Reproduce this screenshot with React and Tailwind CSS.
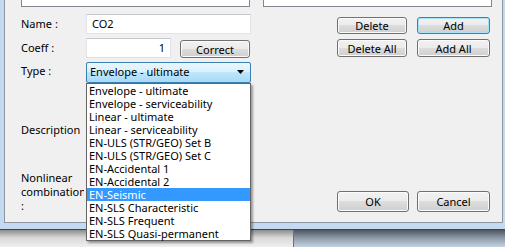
import React from "react";
import clsx from "clsx";

const items = [
    "Envelope - ultimate",
    "Envelope - serviceability",
    "Linear - ultimate",
    "Linear - serviceability",
    "EN-ULS (STR/GEO) Set B",
    "EN-ULS (STR/GEO) Set C",
    "EN-Accidental 1",
    "EN-Accidental 2",
    "EN-Seismic",
    "EN-SLS Characteristic",
    "EN-SLS Frequent",
    "EN-SLS Quasi-permanent",
];

const Btn = ({ children, className, isDefault }) => (
    <div
        className={clsx(
            "flex items-center justify-center rounded-[3px] border text-[11px] leading-none text-black",
            "bg-[linear-gradient(#f2f2f2_0%,#ebebeb_50%,#dddddd_50%,#cfcfcf_100%)]",
            isDefault
                ? "border-[#3c7fb1] shadow-[inset_0_0_0_1px_#a8e3fb]"
                : "border-[#707070] shadow-[inset_0_0_0_1px_#fbfbfb]",
            className
        )}
    >
        {children}
    </div>
);

const Label = ({ children, className }) => (
    <div className={clsx("w-[65px] shrink-0 text-[11px] text-black", className)}>{children}</div>
);

const TextBox = ({ children, className }) => (
    <div
        className={clsx(
            "h-[20px] shrink-0 border border-[#dfe3ea] border-t-[#c3c6cc] bg-white px-[5px] text-[11px] leading-[18px] text-black",
            className
        )}
    >
        {children}
    </div>
);

const App = () => {
    return (
        <div className="relative flex h-[247px] w-[505px] flex-col overflow-hidden bg-white font-['Noto_Sans',sans-serif]">
            {/* window frame */}
            <div className="h-[230px] shrink-0 border-b border-[#3d4651] bg-[#c4daf0] pb-[6px] pl-[4px] pr-[2px]">
                <div className="flex h-full flex-col border-x border-b border-[#8e969f] bg-[#f0f0f0] pl-[16px]">
                    {/* list boxes cut off at the top */}
                    <div className="flex h-[7px] shrink-0">
                        <div className="w-[229px] border-x border-b border-[#828790] bg-white" />
                        <div className="ml-[13px] w-[229px] border-x border-b border-[#828790] bg-white" />
                    </div>

                    {/* name */}
                    <div className="mt-[7px] flex h-[20px] items-start">
                        <Label className="leading-[20px]">Name :</Label>
                        <TextBox className="w-[165px]">CO2</TextBox>
                        <Btn className="ml-[86px] mt-[3px] h-[17px] w-[70px]">Delete</Btn>
                        <Btn isDefault className="ml-[10px] mt-[3px] h-[17px] w-[73px]">Add</Btn>
                    </div>

                    {/* coeff */}
                    <div className="mt-[4px] flex h-[20px] items-start">
                        <Label className="leading-[20px]">Coeff :</Label>
                        <TextBox className="w-[85px] text-right">1</TextBox>
                        <Btn className="ml-[9px] mt-[2px] h-[18px] w-[70px]">Correct</Btn>
                        <Btn className="ml-[87px] mt-[1px] h-[18px] w-[70px]">Delete All</Btn>
                        <Btn className="ml-[10px] mt-[1px] h-[18px] w-[73px]">Add All</Btn>
                    </div>

                    {/* type */}
                    <div className="mt-[4px] flex h-[21px] items-start">
                        <Label className="leading-[18px]">Type :</Label>
                        <div className="flex h-[21px] w-[165px] items-center justify-between rounded-[2px] border border-[#3c7fb1] bg-[linear-gradient(#eaf6fd_0%,#d9f0fc_50%,#bee6fd_50%,#a7d9f5_100%)] pl-[3px] pr-[5px] text-[11px] text-black">
                            <span>Envelope - ultimate</span>
                            <svg width="8" height="5" viewBox="0 0 8 5">
                                <path d="M0 0h7l-3.5 4z" fill="#000" />
                            </svg>
                        </div>
                    </div>

                    <Label className="mt-[39px] leading-[15px]">Description</Label>

                    {/* nonlinear + ok / cancel */}
                    <div className="mt-[34px] flex items-start">
                        <div className="w-[63px] shrink-0 overflow-hidden whitespace-nowrap text-[11px] leading-[14px] text-black">
                            <div>Nonlinear</div>
                            <div>combination</div>
                            <div>:</div>
                        </div>
                        <Btn className="ml-[253px] mt-[20px] h-[21px] w-[72px]">OK</Btn>
                        <Btn className="ml-[8px] mt-[20px] h-[21px] w-[73px]">Cancel</Btn>
                    </div>
                </div>
            </div>

            {/* whatever is behind the dialog */}
            <div className="flex flex-1">
                <div className="w-[293px] bg-[linear-gradient(#8c8c8c,#d8d8d8_45%,#f0f0f0)]" />
                <div className="flex-1 border-l border-[#6b6f74] bg-[linear-gradient(#4e555d,#8a97a5_45%,#c5d5e4)]" />
            </div>

            {/* opened dropdown list */}
            <div className="absolute left-[86px] top-[83px] w-[165px] border border-[#646464] bg-white shadow-[2px_2px_2px_rgba(0,0,0,0.35)]">
                {items.map((it) => (
                    <div
                        key={it}
                        className={clsx(
                            "h-[13px] whitespace-nowrap pl-[2px] text-[11px] leading-[13px]",
                            it === "EN-Seismic" ? "bg-[#3399ff] text-white" : "text-black"
                        )}
                    >
                        {it}
                    </div>
                ))}
            </div>
        </div>
    );
};

export default App;
